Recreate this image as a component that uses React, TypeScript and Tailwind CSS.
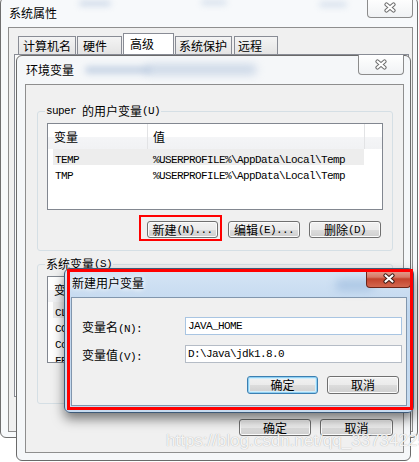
import React from "react";

type P = { children?: React.ReactNode; className?: string };

const Cj = ({ children, className = "" }: P) => (
  <span className={`font-['Noto_Sans_CJK_SC',sans-serif] text-[12px] leading-[14px] text-black ${className}`}>{children}</span>
);
const Mo = ({ children }: P) => (
  <span className="font-['Liberation_Mono',monospace] text-[11px] leading-[14px] tracking-[-0.6px] text-black whitespace-pre">{children}</span>
);

function Btn({ children, className = "", primary = false }: P & { primary?: boolean }) {
  return (
    <div
      className={`h-[17px] flex items-center justify-center rounded-[3px] border bg-[linear-gradient(#f2f2f2_0%,#ebebeb_50%,#dddddd_50%,#cfcfcf_100%)] ${
        primary
          ? "border-[#3c7fb1] shadow-[inset_0_0_0_1px_#8fd0f3,inset_0_0_0_2px_#d3eefb]"
          : "border-[#707070] shadow-[inset_0_0_0_1px_#fbfbfb]"
      } ${className}`}
    >
      {children}
    </div>
  );
}

function XGlyph({ outline }: { outline: string }) {
  return (
    <svg width="14" height="11" viewBox="0 0 14 11">
      <path d="M3.5 2.5L10.5 8.5M10.5 2.5L3.5 8.5" stroke={outline} strokeWidth="4.2" strokeLinecap="round" fill="none" />
      <path d="M3.5 2.5L10.5 8.5M10.5 2.5L3.5 8.5" stroke="#ffffff" strokeWidth="2.2" strokeLinecap="round" fill="none" />
    </svg>
  );
}

function CloseInactive({ className = "" }: P) {
  return (
    <div
      className={`absolute w-[46px] h-[20px] rounded-b-[4px] border border-t-0 border-[#8c8c8c] bg-[linear-gradient(#ffffff,#f0f2f4)] flex items-center justify-center ${className}`}
    >
      <XGlyph outline="#6e6e6e" />
    </div>
  );
}

function ListView({ rows }: { rows: [string, string][] }) {
  return (
    <div className="h-[87px] border border-[#828790] bg-white overflow-hidden">
      <div className="h-[25px] flex bg-[linear-gradient(#ffffff_0%,#ffffff_50%,#f4f5f7_50%,#f1f2f4_100%)]">
        <div className="w-[99px] pl-[6px] flex items-center">
          <Cj>变量</Cj>
        </div>
        <div className="w-px bg-[#e2e3e5]" />
        <div className="w-[216px] pl-[5px] flex items-center">
          <Cj>值</Cj>
        </div>
        <div className="w-px bg-[#e2e3e5]" />
        <div className="flex-1" />
      </div>
      {rows.map((r, i) => (
        <div key={i} className="h-[16px] flex pl-[5px]">
          <div className={`w-[311px] flex items-center ${i === 0 ? "bg-[#ededed]" : ""}`}>
            <div className="w-[98px] pl-[2px] whitespace-nowrap overflow-hidden">
              <Mo>{r[0]}</Mo>
            </div>
            <div className="flex-1 pl-[2px] whitespace-nowrap overflow-hidden">
              {r[1] && <Mo>{r[1]}</Mo>}
            </div>
          </div>
        </div>
      ))}
    </div>
  );
}

function Group({ label, children, className = "" }: P & { label: React.ReactNode }) {
  return (
    <fieldset className={`min-w-0 border border-[#d5dfe5] rounded-[3px] px-[9px] pt-[5px] pb-[12px] ${className}`}>
      <legend className="ml-[-2px] px-[1px] h-[14px] flex items-center">{label}</legend>
      {children}
    </fieldset>
  );
}

function GroupButtons({ keys, mark, hidden }: { keys: [string, string, string]; mark?: boolean; hidden?: boolean }) {
  return (
    <div className="mt-[11px] flex justify-end pr-[2px]">
      <div className="relative">
        <Btn className="w-[71px]">
          {!hidden && (
            <>
              <Cj>新建</Cj>
              <Mo>{`(${keys[0]})...`}</Mo>
            </>
          )}
        </Btn>
        {mark && <div className="absolute -left-[8px] -top-[6px] -right-[4px] -bottom-[3px] border-2 border-[#ff0000]" />}
      </div>
      <Btn className="w-[72px] ml-[10px]">
        {!hidden && (
          <>
            <Cj>编辑</Cj>
            <Mo>{`(${keys[1]})...`}</Mo>
          </>
        )}
      </Btn>
      <Btn className="w-[72px] ml-[9px]">
        {!hidden && (
          <>
            <Cj>删除</Cj>
            <Mo>{`(${keys[2]})`}</Mo>
          </>
        )}
      </Btn>
    </div>
  );
}

function Tab({ label, className = "", selected = false }: P & { label: string; selected?: boolean }) {
  return (
    <div
      className={`flex items-center border border-b-0 border-[#898c95] ${
        selected ? "h-[21px] bg-white" : "h-[18px] bg-[linear-gradient(#f4f4f4,#e4e4e4)]"
      } ${className}`}
    >
      <Cj>{label}</Cj>
    </div>
  );
}

export default function App() {
  return (
    <div className="relative w-[419px] h-[462px] overflow-hidden bg-white">
      {/* 系统属性 window */}
      <div className="absolute left-0 top-[-3px] w-[418px] h-[441px] rounded-[6px] border border-[#6f6f6f] bg-[#f7f9fb] flex flex-col pl-[7px] pr-[4px] pb-[5px]">
        <div className="absolute left-[78px] top-[3px] w-[32px] h-[5px] rounded-full bg-[#9fb6d4] opacity-50 blur-[3px]" />
        <div className="absolute left-[200px] top-[2px] w-[26px] h-[5px] rounded-full bg-[#9fb6d4] opacity-40 blur-[3px]" />
        <div className="absolute left-[318px] top-[4px] w-[28px] h-[5px] rounded-full bg-[#9fb6d4] opacity-40 blur-[3px]" />
        <div className="h-[29px] flex items-center pl-[1px]">
          <Cj className="[text-shadow:0_0_5px_#fff]">系统属性</Cj>
        </div>
        <div className="flex-1 border border-[#8e8e8e] bg-[#f0f0f0] flex flex-col pt-[5px]">
          <div className="h-[21px] flex items-end pl-[9px]">
            <Tab label="计算机名" className="w-[58px] pl-[4px]" />
            <Tab label="硬件" className="w-[45px] ml-[1px] pl-[5px]" />
            <Tab label="高级" className="w-[51px] ml-[1px] pl-[6px]" selected />
            <Tab label="系统保护" className="w-[57px] ml-[1px] pl-[3px]" />
            <Tab label="远程" className="w-[44px] ml-[2px] pl-[3px]" />
          </div>
          <div className="flex-1 ml-[5px] mr-[3px] mb-[34px] border border-[#898c95] bg-[#fbfbfb]" />
        </div>
        <CloseInactive className="top-0 right-[4px] h-[19px]" />
      </div>

      {/* 环境变量 window */}
      <div className="absolute left-[16px] top-[55px] w-[395px] h-[406px] rounded-[6px] border border-[#6a6a6a] bg-[#f5f7f9] flex flex-col pl-[8px] pr-[6px] pb-[7px]">
        <div className="absolute left-[68px] top-[10px] w-[66px] h-[8px] rounded-full bg-[#9db4d3] opacity-50 blur-[3px]" />
        <div className="absolute left-[128px] top-[8px] w-[112px] h-[11px] rounded-full bg-[#a7bcd8] opacity-50 blur-[4px]" />
        <div className="h-[28px] flex items-center pl-[1px]">
          <Cj className="[text-shadow:0_0_5px_#fff]">环境变量</Cj>
        </div>
        <div className="flex-1 border border-[#8e8e8e] bg-[#f0f0f0] flex flex-col pl-[11px] pr-[10px] pt-[19px]">
          <Group
            label={
              <>
                <Mo>{"super "}</Mo>
                <Cj>的用户变量</Cj>
                <Mo>(U)</Mo>
              </>
            }
          >
            <ListView
              rows={[
                ["TEMP", "%USERPROFILE%\\AppData\\Local\\Temp"],
                ["TMP", "%USERPROFILE%\\AppData\\Local\\Temp"],
              ]}
            />
            <GroupButtons keys={["N", "E", "D"]} mark />
          </Group>
          <Group
            className="mt-[6px]"
            label={
              <>
                <Cj>系统变量</Cj>
                <Mo>(S)</Mo>
              </>
            }
          >
            <ListView
              rows={[
                ["CL", ""],
                ["CO", ""],
                ["Co", ""],
                ["FP", ""],
              ]}
            />
            <GroupButtons keys={["W", "I", "L"]} hidden />
          </Group>
          <div className="mt-[15px] flex justify-end">
            <Btn className="w-[72px]">
              <Cj>确定</Cj>
            </Btn>
            <Btn className="w-[73px] ml-[9px]">
              <Cj>取消</Cj>
            </Btn>
          </div>
        </div>
        <CloseInactive className="top-[-1px] right-[6px]" />
      </div>

      {/* 新建用户变量 dialog */}
      <div className="absolute left-[64px] top-[268px] w-[350px] h-[145px] rounded-[6px] border border-[#3e5a78] bg-[linear-gradient(180deg,#d6e5f5_0%,#bfd6ee_30%,#c6dbf0_100%)] shadow-[0_6px_12px_rgba(0,0,0,0.5)] flex flex-col pl-[6px] pr-[6px] pb-[6px]">
        <div className="absolute left-[270px] top-[10px] w-[40px] h-[12px] rounded-full bg-[#8fb1d8] opacity-50 blur-[4px]" />
        <div className="h-[28px] flex items-center pl-[1px]">
          <Cj className="[text-shadow:0_0_4px_#fff,0_0_6px_#fff]">新建用户变量</Cj>
        </div>
        <div className="flex-1 border border-[#8196ad] bg-[#f0f0f0] flex flex-col pl-[10px] pr-[4px] pt-[19px]">
          <div className="h-[18px] flex items-center">
            <div className="w-[103px]">
              <Cj>变量名</Cj>
              <Mo>(N):</Mo>
            </div>
            <div className="flex-1 h-[18px] border border-[#a9c5e2] bg-white pl-[2px] flex items-center">
              <Mo>JAVA_HOME</Mo>
            </div>
          </div>
          <div className="h-[18px] mt-[10px] flex items-center">
            <div className="w-[103px]">
              <Cj>变量值</Cj>
              <Mo>(V):</Mo>
            </div>
            <div className="flex-1 h-[18px] border border-[#b5bcc6] bg-white pl-[2px] flex items-center">
              <Mo>{"D:\\Java\\jdk1.8.0"}</Mo>
            </div>
          </div>
          <div className="mt-[13px] flex justify-end pr-[3px]">
            <Btn className="w-[71px] h-[18px]" primary>
              <Cj>确定</Cj>
            </Btn>
            <Btn className="w-[72px] h-[18px] ml-[9px]">
              <Cj>取消</Cj>
            </Btn>
          </div>
        </div>
        <div className="absolute top-0 right-[2px] w-[45px] h-[19px] rounded-b-[4px] border border-t-0 border-[#6b2418] bg-[linear-gradient(#e9a99b_0%,#d77a66_45%,#c3442d_55%,#d3674f_100%)] flex items-center justify-center">
          <XGlyph outline="#3b1a14" />
        </div>
      </div>

      {/* red annotation */}
      <div className="absolute left-[67px] top-[269px] w-[346px] h-[141px] border-[3px] border-[#ff0000]" />

      {/* watermark */}
      <div className="absolute left-[166px] top-[431px] font-['Liberation_Sans',sans-serif] text-[17px] leading-[20px] text-[rgba(255,255,255,0.9)] [text-shadow:0_0_1px_rgba(0,0,0,0.35)] whitespace-nowrap">
        https://blog.csdn.net/qq_33734225
      </div>
    </div>
  );
}
